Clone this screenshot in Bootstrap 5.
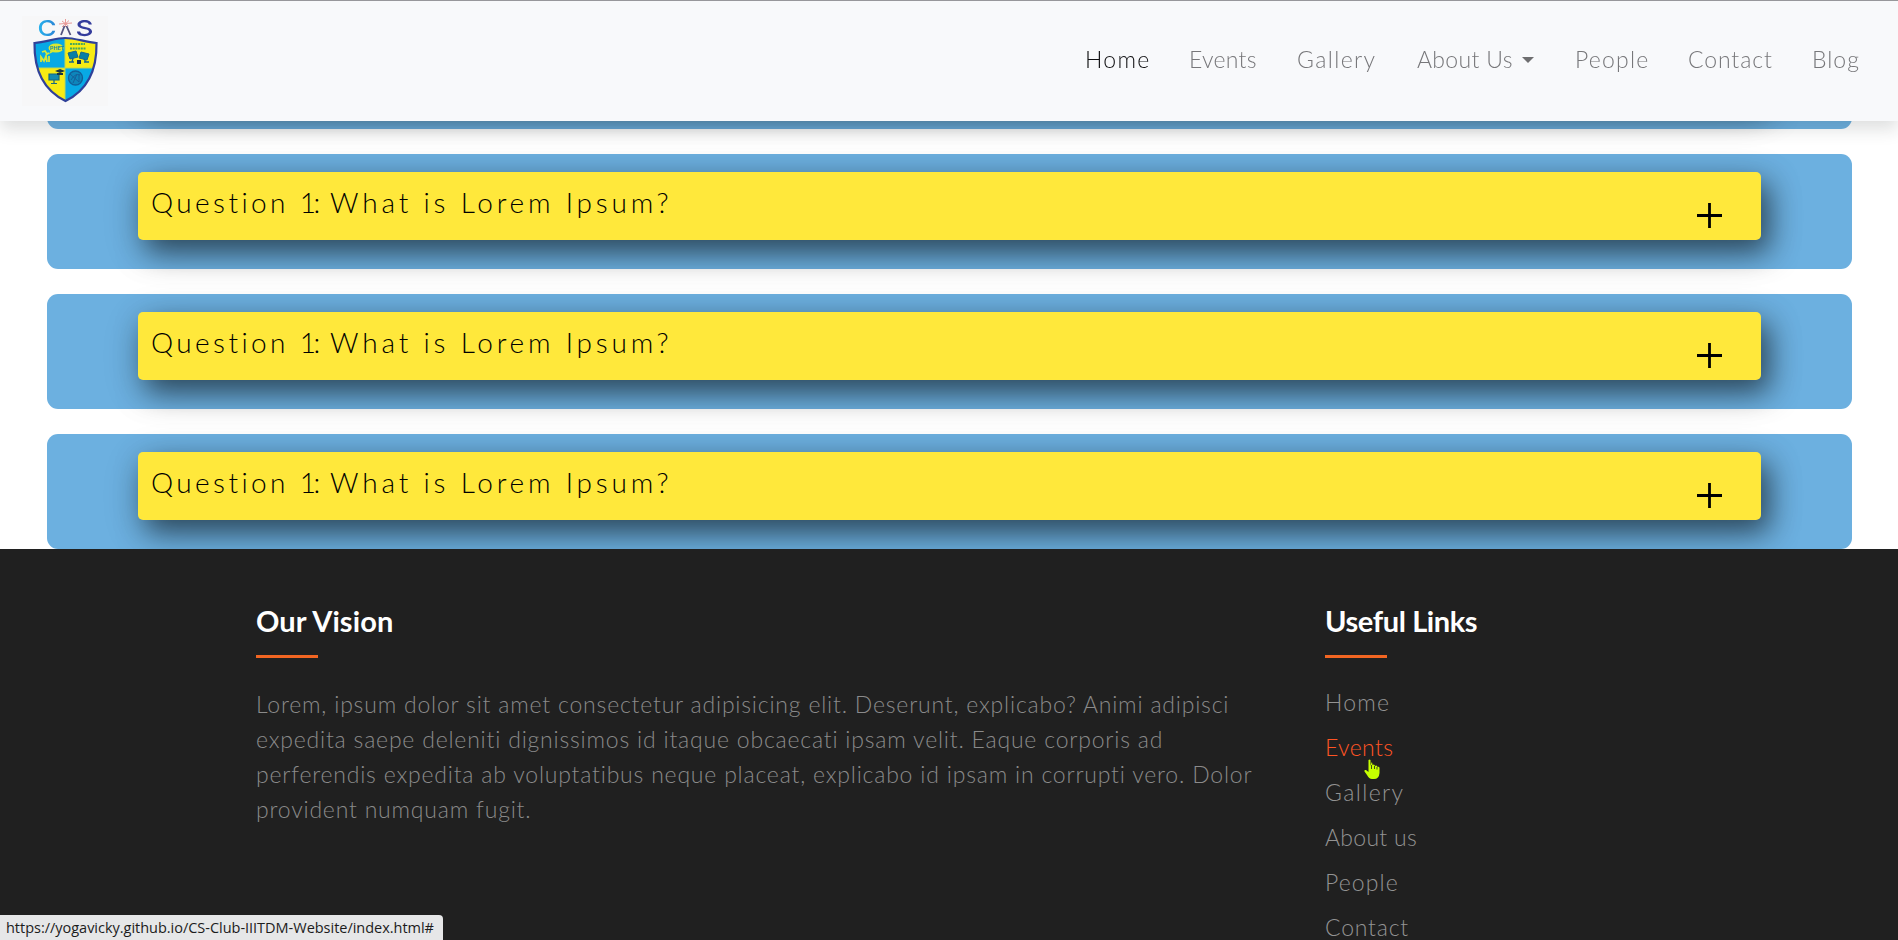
<!DOCTYPE html>
<html lang="en">
<head>
<meta charset="utf-8">
<meta name="viewport" content="width=device-width, initial-scale=1">
<title>CS Club</title>
<link href="https://cdn.jsdelivr.net/npm/bootstrap@5.3.0/dist/css/bootstrap.min.css" rel="stylesheet">
<style>
body { font-family: Lato, "Open Sans", sans-serif; font-weight: 300; height: 940px; overflow: hidden; background: #fff; }
.site-nav { height: 121px; padding: 0 0 5px 22px; border-top: 1px solid #97979b; background: #f8f9fb; }
.site-nav .nav-link { padding: 0; font-size: 23px; line-height: 34px; color: #77777a; white-space: nowrap; }
.site-nav .nav-link.active { color: #101012; }
.site-nav li:nth-child(1) { width: 104px; letter-spacing: 1.3px; }
.site-nav li:nth-child(2) { width: 108px; letter-spacing: .3px; }
.site-nav li:nth-child(3) { width: 120px; letter-spacing: 1.4px; }
.site-nav li:nth-child(4) { width: 158px; letter-spacing: .35px; }
.site-nav li:nth-child(5) { width: 113px; letter-spacing: 1.2px; }
.site-nav li:nth-child(6) { width: 124px; letter-spacing: .9px; }
.site-nav li:nth-child(7) { width: 86px; letter-spacing: 1px; }
.caret-down { display: inline-block; margin-left: 9px; vertical-align: 5px; border: 6px solid transparent; border-top-color: #6e6e70; border-bottom: 0; }
.faq-list { padding: 14px 46px 0 47px; gap: 25px; }
.faq-card { height: 115px; padding: 18px 91px 0; border-radius: 11px; background: #6cb0e0; }
.faq-head { height: 68px; padding: 0 39px 0 12px; border-radius: 5px; background: #ffe83b; box-shadow: 8px 12px 28px rgba(0,0,0,.5), 4px 10px 40px rgba(0,0,0,.2); }
.faq-title { padding-left: 1px; font-size: 28px; line-height: 61px; letter-spacing: 3.8px; color: #000; }
.faq-title .lead-part { letter-spacing: 3.4px; }
.faq-title .num { letter-spacing: -2.5px; }
.faq-title .colon { letter-spacing: -1px; }
.plus-icon { margin-top: 31px; }
.site-footer { height: 391px; padding: 54px 0 0 256px; background: #202020; overflow: hidden; color: #8a8a8a; font-size: 23px; }
.vision-col { width: 1013px; margin-right: 56px; }
.foot-title { font-size: 29px; line-height: 35px; font-weight: 700; color: #fff; margin: 0 0 17px; }
.vision-col .foot-title { letter-spacing: .1px; }
.links-col .foot-title { letter-spacing: -.4px; }
.rule-bar { width: 62px; height: 3px; background: #f26522; }
.vision-col p { margin: 29px 0 0; line-height: 35px; letter-spacing: .8px; }
.links-col ul { margin: 22px 0 0; line-height: 45px; }
.links-col a { color: #939393; text-decoration: none; }
.links-col a.hovered { color: #ff5424; }
.links-col li:nth-child(1) { letter-spacing: 1.2px; }
.links-col li:nth-child(2) { letter-spacing: .4px; }
.links-col li:nth-child(3) { letter-spacing: 1.4px; }
.links-col li:nth-child(4) { letter-spacing: .3px; }
.links-col li:nth-child(5) { letter-spacing: 1.1px; }
.links-col li:nth-child(6) { letter-spacing: .8px; }
.hand-pointer { position: absolute; left: 39px; top: 34px; z-index: 2; }
.url-status { position: fixed; left: 0; bottom: 0; width: 443px; height: 25px; padding-left: 6px; border-top-right-radius: 4px; background: #e6e7e8; color: #1c1c1c; font: 400 14.5px/26px "Open Sans", sans-serif; white-space: nowrap; letter-spacing: -.02px; }
</style>
</head>
<body>
<nav class="site-nav fixed-top shadow d-flex align-items-center">
  <a href="#" aria-label="CS Club" class="d-block mt-1">
    <svg class="d-block overflow-visible" width="86" height="90" viewBox="22 16 86 90">
      <rect x="22" y="16" width="86" height="90" fill="#f7f7f8"/>
      <defs>
        <linearGradient id="gc" x1="0" x2="1"><stop offset="0" stop-color="#27b4ee"/><stop offset="1" stop-color="#2b82d4"/></linearGradient>
        <clipPath id="sh"><path d="M65 38C56 38 46 42 34.500 43C34 70 43 90 65.500 101C88 90 97 70 96.500 43C85 42 75 38 65 38Z"/></clipPath>
      </defs>
      <g font-family="Inter, sans-serif" font-weight="500" font-size="22">
        <text x="37.500" y="35.500" fill="url(#gc)" textLength="19" lengthAdjust="spacingAndGlyphs">C</text>
        <text x="75.500" y="35.500" fill="#343c9c" textLength="18" lengthAdjust="spacingAndGlyphs">S</text>
      </g>
      <path d="M59 24L72 23M65.500 19V27M62 21L68.500 26M69 20.500L62 27" stroke="#e89a98" stroke-width="1"/>
      <path d="M64.500 26L61 35M66.500 26L70.500 35" stroke="#53537e" stroke-width="1.800" fill="none"/>
      <g clip-path="url(#sh)">
        <path fill="#08a9e5" d="M32 36H65V68H32ZM65 68H98V103H65Z"/>
        <path fill="#f7eb14" d="M65 36H98V68H65ZM32 68H65V103H32Z"/>
        <path d="M65 37V103M33 68H98" stroke="#bed656" stroke-width="1"/>
      </g>
      <ellipse cx="56" cy="48" rx="7.500" ry="4.500" fill="#d8e735"/><path d="M51 50L49 54L55 51" fill="#d8e735"/>
      <text x="50" y="50" font-family="Lato, sans-serif" font-weight="700" font-size="5.500" fill="#1684a8">PHET</text>
      <path d="M42 52l3-1 2 3 2-1M41 62v-5l3 4 2-5 1 6M49 62v-6" stroke="#d8e735" stroke-width="1.800" fill="none"/>
      <path d="M70 44H85M70 48.500H86" stroke="#48a65b" stroke-width="1.800" stroke-dasharray="2 .7"/>
      <path d="M68 53l8-2 2 6-8 2zM81 52l8 2-2 6-8-2z" fill="#087fa5" stroke="#17678a"/>
      <path d="M73 58l-1 4M84 59l2 3M69 62h5M84 62h5" stroke="#17678a" stroke-width="1.300"/>
      <path d="M77 60h4v4h-4z" fill="#122f5b"/>
      <path d="M49 74h10v6H49zM54 80v3M51 83.500h6" fill="#168aaf" stroke="#176781" stroke-width="1.200"/>
      <path d="M55 71l5-2 5 2-5 2zM57 73v2h6v-2" fill="#1c3542"/>
      <circle cx="75.500" cy="78" r="7" fill="#0d86bb" stroke="#125f99" stroke-width="1.300"/>
      <path d="M70 74l9 8M71 80q4-7 9-5M73 83l4-9M79 74v8" stroke="#15609b" fill="none"/>
      <path d="M65 38C56 38 46 42 34.500 43C34 70 43 90 65.500 101C88 90 97 70 96.500 43C85 42 75 38 65 38Z" fill="none" stroke="#304199" stroke-width="2.200"/>
    </svg>
  </a>
  <ul class="nav ms-auto flex-nowrap">
    <li><a class="nav-link active" href="#">Home</a></li>
    <li><a class="nav-link" href="#">Events</a></li>
    <li><a class="nav-link" href="#">Gallery</a></li>
    <li><a class="nav-link" href="#">About Us<span class="caret-down"></span></a></li>
    <li><a class="nav-link" href="#">People</a></li>
    <li><a class="nav-link" href="#">Contact</a></li>
    <li><a class="nav-link" href="#">Blog</a></li>
  </ul>
</nav>

<main class="faq-list d-flex flex-column">
  <section class="faq-card"><div class="faq-head"></div></section>
  <section class="faq-card"><div class="faq-head d-flex justify-content-between align-items-start">
    <span class="faq-title"><span class="lead-part">Question </span><span class="num">1</span><span class="colon">:</span> What is Lorem Ipsum?</span>
    <svg class="plus-icon" width="25" height="25"><path d="M0 12.500H25M12.500 0V25" stroke="#000" stroke-width="2.800"/></svg>
  </div></section>
  <section class="faq-card"><div class="faq-head d-flex justify-content-between align-items-start">
    <span class="faq-title"><span class="lead-part">Question </span><span class="num">1</span><span class="colon">:</span> What is Lorem Ipsum?</span>
    <svg class="plus-icon" width="25" height="25"><path d="M0 12.500H25M12.500 0V25" stroke="#000" stroke-width="2.800"/></svg>
  </div></section>
  <section class="faq-card"><div class="faq-head d-flex justify-content-between align-items-start">
    <span class="faq-title"><span class="lead-part">Question </span><span class="num">1</span><span class="colon">:</span> What is Lorem Ipsum?</span>
    <svg class="plus-icon" width="25" height="25"><path d="M0 12.500H25M12.500 0V25" stroke="#000" stroke-width="2.800"/></svg>
  </div></section>
</main>

<footer class="site-footer d-flex position-relative">
  <div class="vision-col flex-shrink-0">
    <h2 class="foot-title">Our Vision</h2>
    <div class="rule-bar"></div>
    <p>Lorem, ipsum dolor sit amet consectetur adipisicing elit. Deserunt, explicabo? Animi adipisci expedita saepe deleniti dignissimos id itaque obcaecati ipsam velit. Eaque corporis ad perferendis expedita ab voluptatibus neque placeat, explicabo id ipsam in corrupti vero. Dolor provident numquam fugit.</p>
  </div>
  <div class="links-col">
    <h2 class="foot-title">Useful Links</h2>
    <div class="rule-bar"></div>
    <ul class="list-unstyled">
      <li><a href="#">Home</a></li>
      <li class="position-relative"><a class="hovered" href="#">Events</a>
        <svg class="hand-pointer" width="16" height="21" viewBox="0 0 16 21"><path d="M4.500 1Q5.700-.2 6.500 1V7Q8-.1 8.500 6Q10.500 4.500 11 7Q13 5.500 13.500 8Q15.300 7 15.500 9V14Q15 20 10 20H8Q5 20 3 16L.5 12.500Q0 10.500 2 11L4.500 13Z" fill="#c6ff00"/><path d="M7.500 6v4M10.500 7v3M13 8v2.500" stroke="#202020" stroke-width=".8"/></svg>
      </li>
      <li><a href="#">Gallery</a></li>
      <li><a href="#">About us</a></li>
      <li><a href="#">People</a></li>
      <li><a href="#">Contact</a></li>
    </ul>
  </div>
</footer>
<div class="url-status">https://yogavicky.github.io/CS-Club-IIITDM-Website/index.html#</div>
<script src="https://cdn.jsdelivr.net/npm/bootstrap@5.3.0/dist/js/bootstrap.bundle.min.js"></script>
</body>
</html>
